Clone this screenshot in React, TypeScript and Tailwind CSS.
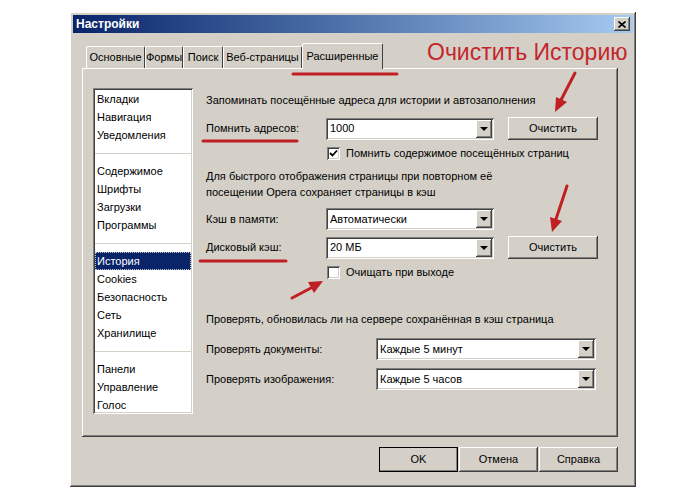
const raised =
  "shadow-[inset_-1px_-1px_0_#404040,inset_1px_1px_0_#ffffff,inset_-2px_-2px_0_#808080,inset_2px_2px_0_#d4d0c8]";
const sunken =
  "shadow-[inset_1px_1px_0_#808080,inset_-1px_-1px_0_#ffffff,inset_2px_2px_0_#404040,inset_-2px_-2px_0_#d4d0c8]";

function Combo({ value, className }: { value: string; className: string }) {
  return (
    <div className={`h-[22px] bg-white flex items-center pl-[4px] pr-[2px] ${sunken} ${className}`}>
      <span className="flex-1 text-[11px] leading-none">{value}</span>
      <div className={`w-[16px] h-[18px] bg-[#d4d0c8] flex items-center justify-center ${raised}`}>
        <div className="w-0 h-0 border-l-[4px] border-r-[4px] border-t-[4px] border-l-transparent border-r-transparent border-t-black" />
      </div>
    </div>
  );
}

function Button({ label, className, isDefault }: { label: string; className: string; isDefault?: boolean }) {
  return (
    <div
      className={`flex items-center justify-center bg-[#d4d0c8] text-[11px] ${raised} ${className} ${
        isDefault ? "outline outline-1 outline-black -outline-offset-1" : ""
      }`}
    >
      {label}
    </div>
  );
}

function Checkbox({ checked }: { checked?: boolean }) {
  return (
    <div className={`w-[13px] h-[13px] bg-white flex items-center justify-center ${sunken}`}>
      {checked && (
        <svg width="9" height="9" viewBox="0 0 9 9">
          <path d="M1 4 L3.5 6.5 L8 1.5" stroke="#000" strokeWidth="1.8" fill="none" />
        </svg>
      )}
    </div>
  );
}

const groups = [
  ["Вкладки", "Навигация", "Уведомления"],
  ["Содержимое", "Шрифты", "Загрузки", "Программы"],
  ["История", "Cookies", "Безопасность", "Сеть", "Хранилище"],
  ["Панели", "Управление", "Голос"],
];

const tabs = [
  { label: "Основные", w: "w-[59px]" },
  { label: "Формы", w: "w-[38px]" },
  { label: "Поиск", w: "w-[40px]" },
  { label: "Веб-страницы", w: "w-[79px]" },
];

export default function App() {
  return (
    <div className="relative w-[700px] h-[500px] bg-white overflow-hidden font-['Liberation_Sans',Arial,sans-serif] text-black">
      <div className="pt-[12px] pl-[70px]">
        <div className={`w-[566px] h-[475px] bg-[#d4d0c8] p-[3px] flex flex-col ${raised}`}>
          {/* title bar */}
          <div className="h-[18px] flex items-center justify-between pl-[3px] pr-[3px] bg-gradient-to-r from-[#0a246a] to-[#a6caf0]">
            <span className="text-white font-bold text-[12px]">Настройки</span>
            <div className={`w-[16px] h-[14px] bg-[#d4d0c8] flex items-center justify-center ${raised}`}>
              <svg width="8" height="7" viewBox="0 0 8 7">
                <path d="M0.5 0.5 L7.5 6.5 M7.5 0.5 L0.5 6.5" stroke="#000" strokeWidth="1.6" />
              </svg>
            </div>
          </div>

          <div className="pl-[9px] pt-[10px]">
            {/* tabs */}
            <div className="flex items-end h-[25px] pl-[4px]">
              {tabs.map((t) => (
                <div
                  key={t.label}
                  className={`${t.w} h-[22px] flex items-center justify-center whitespace-nowrap text-[11px] border-t border-l border-white border-r border-r-[#404040] rounded-t-[2px]`}
                >
                  {t.label}
                </div>
              ))}
              <div className="relative z-10 w-[81px] h-[26px] -mb-[1px] bg-[#d4d0c8] flex items-center justify-center whitespace-nowrap text-[11px] border-t border-l border-white border-r border-r-[#404040] rounded-t-[2px]">
                Расширенные
              </div>
            </div>

            {/* panel */}
            <div className={`w-[536px] h-[369px] flex pl-[11px] pt-[20px] ${raised}`}>
              <div className={`w-[100px] h-[326px] bg-white p-[2px] ${sunken}`}>
                {groups.map((g, gi) => (
                  <div key={gi}>
                    {gi > 0 && (
                      <div className="h-[18px] flex items-center">
                        <div className="w-full h-px bg-[#d4d0c8]" />
                      </div>
                    )}
                    {g.map((item) =>
                      item === "История" ? (
                        <div key={item} className="h-[18px] flex items-center px-[2px] bg-[#0a246a] text-white text-[11px] outline outline-1 outline-dotted outline-[#c8c8c8] -outline-offset-1">
                          {item}
                        </div>
                      ) : (
                        <div key={item} className="h-[18px] flex items-center px-[2px] text-[11px]">
                          {item}
                        </div>
                      )
                    )}
                  </div>
                ))}
              </div>

              <div className="ml-[13px] pt-[4px] flex flex-col text-[11px]">
                <div className="h-[16px] flex items-center">Запоминать посещённые адреса для истории и автозаполнения</div>

                <div className="mt-[9px] h-[23px] flex items-center">
                  <span className="w-[120px]">Помнить адресов:</span>
                  <Combo value="1000" className="w-[168px]" />
                  <Button label="Очистить" className="ml-[14px] w-[90px] h-[23px]" />
                </div>

                <div className="mt-[5px] h-[16px] flex items-center pl-[121px] gap-[6px]">
                  <Checkbox checked />
                  <span>Помнить содержимое посещённых страниц</span>
                </div>

                <div className="mt-[7px] leading-[16px]">
                  <div>Для быстрого отображения страницы при повторном её</div>
                  <div>посещении Opera сохраняет страницы в кэш</div>
                </div>

                <div className="mt-[8px] h-[22px] flex items-center">
                  <span className="w-[120px]">Кэш в памяти:</span>
                  <Combo value="Автоматически" className="w-[168px]" />
                </div>

                <div className="mt-[6px] h-[23px] flex items-center">
                  <span className="w-[120px]">Дисковый кэш:</span>
                  <Combo value="20 МБ" className="w-[168px]" />
                  <Button label="Очистить" className="ml-[14px] w-[90px] h-[23px]" />
                </div>

                <div className="mt-[5px] h-[16px] flex items-center pl-[121px] gap-[6px]">
                  <Checkbox />
                  <span>Очищать при выходе</span>
                </div>

                <div className="mt-[31px] h-[16px] flex items-center">Проверять, обновилась ли на сервере сохранённая в кэш страница</div>

                <div className="mt-[11px] h-[22px] flex items-center">
                  <span className="w-[170px]">Проверять документы:</span>
                  <Combo value="Каждые 5 минут" className="w-[220px]" />
                </div>

                <div className="mt-[8px] h-[22px] flex items-center">
                  <span className="w-[170px]">Проверять изображения:</span>
                  <Combo value="Каждые 5 часов" className="w-[220px]" />
                </div>
              </div>
            </div>

            {/* bottom buttons */}
            <div className="w-[536px] mt-[10px] flex justify-end">
              <Button label="OK" isDefault className="w-[79px] h-[25px]" />
              <Button label="Отмена" className="ml-[1px] w-[79px] h-[25px]" />
              <Button label="Справка" className="ml-[1px] w-[79px] h-[25px]" />
            </div>
          </div>
        </div>
      </div>

      {/* annotations */}
      <div className="absolute left-[427px] top-[37px] text-[23px] leading-[30px] text-[#c4262b] font-['Liberation_Sans',Arial,sans-serif]">
        Очистить Историю
      </div>
      <svg className="absolute inset-0 pointer-events-none" width="700" height="500">
        <g stroke="#c01f24" strokeWidth="3" strokeLinecap="round">
          <line x1="293" y1="74" x2="397" y2="74" />
          <line x1="203" y1="141" x2="297" y2="141" />
          <line x1="200" y1="261" x2="286" y2="261" />
          <line x1="575" y1="73" x2="561" y2="100" />
          <line x1="567" y1="186" x2="556" y2="219" />
          <line x1="292" y1="298" x2="311" y2="288" />
        </g>
        <g fill="#c01f24">
          <polygon points="555,112 567,102 556,97" />
          <polygon points="552,232 562,221 550,217" />
          <polygon points="323,281 314,293 308,282" />
        </g>
      </svg>
    </div>
  );
}
